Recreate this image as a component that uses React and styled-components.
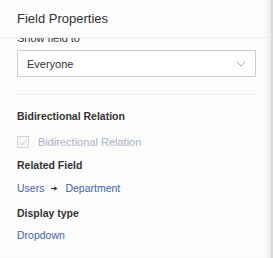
import styled, { createGlobalStyle } from "styled-components";

const GlobalStyle = createGlobalStyle`
  html, body {
    margin: 0;
    padding: 0;
    background: #d9d9d9;
    font-family: "Liberation Sans", Arial, sans-serif;
  }
`

const Panel = styled.div`
  width: 271px;
  height: 258px;
  background: #fcfcfc;
  box-shadow: inset -7px 0 7px -5px rgba(0, 0, 0, 0.09);
  display: flex;
  flex-direction: column;
  overflow: hidden;
`
const Header = styled.div`
  height: 37px;
  border-bottom: 1px solid #ececec;
  padding: 0 17px;
  display: flex;
  align-items: center;
  font-size: 13px;
  color: #333;
  box-sizing: content-box;
  flex-shrink: 0;
`
const Body = styled.div`
  flex: 1;
  overflow: hidden;
  padding: 0 15px 0 17px;
`
const Label = styled.div`
  font-size: ${(p) => (p.bold ? 10.5 : 11)}px;
  font-weight: ${(p) => (p.bold ? 700 : 400)};
  color: #333;
  line-height: 16px;
  margin-top: ${(p) => p.top || 0}px;
`
const Select = styled.div`
  height: 25px;
  border: 1px solid #cfcfcf;
  background: #fff;
  display: flex;
  align-items: center;
  justify-content: space-between;
  padding: 0 9px;
  font-size: 11px;
  color: #333;
  margin-top: 4px;
`
const Divider = styled.div`
  height: 1px;
  background: #ececec;
  margin-top: 17px;
`
const CheckRow = styled.div`
  display: flex;
  align-items: center;
  gap: 9px;
  height: 16px;
  margin-top: 10px;
  font-size: 11px;
  color: #a9b1c6;
`
const Box = styled.div`
  width: 10px;
  height: 10px;
  border: 1px solid #cfd3dc;
  background: #f7f7f8;
  display: flex;
  align-items: center;
  justify-content: center;
`
const Link = styled.div`
  font-size: 10.5px;
  color: #4263ac;
  line-height: 16px;
  margin-top: ${(p) => p.top || 0}px;
  display: flex;
  align-items: center;
  gap: 7px;
`

function App() {
  return (
    <>
      <GlobalStyle />
      <Panel>
        <Header>Field Properties</Header>
        <Body>
          <Label top={-8}>Show field to</Label>
          <Select>
            Everyone
            <svg width="10" height="6" viewBox="0 0 10 6">
              <path d="M0.5 0.5 L5 5 L9.5 0.5" fill="none" stroke="#a8a8a8" strokeWidth="1" />
            </svg>
          </Select>
          <Divider />
          <Label bold top={13}>Bidirectional Relation</Label>
          <CheckRow>
            <Box>
              <svg width="9" height="8" viewBox="0 0 9 8">
                <path d="M1 4.5 L3.3 7 L8 1" fill="none" stroke="#c9ced8" strokeWidth="1" />
              </svg>
            </Box>
            Bidirectional Relation
          </CheckRow>
          <Label bold top={7}>Related Field</Label>
          <Link top={7}>
            Users
            <svg width="7" height="5" viewBox="0 0 7 5">
              <path d="M0 2.5 H4" stroke="#333" strokeWidth="1.2" />
              <path d="M3.5 0.3 L6.5 2.5 L3.5 4.7 Z" fill="#333" />
            </svg>
            Department
          </Link>
          <Label bold top={9}>Display type</Label>
          <Link top={6}>Dropdown</Link>
        </Body>
      </Panel>
    </>
  )
}

export default App;
